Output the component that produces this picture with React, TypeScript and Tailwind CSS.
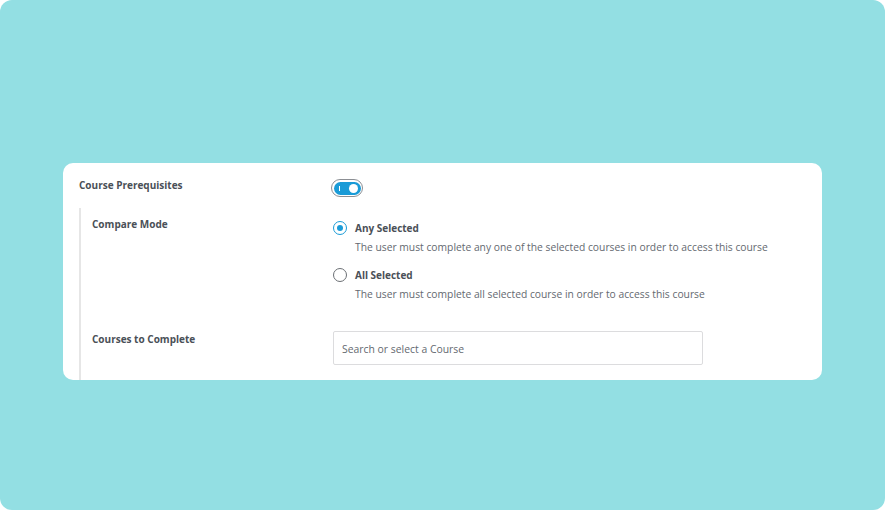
import React, { useState } from 'react';

const font = { fontFamily: '"Open Sans", "Noto Sans", sans-serif' };

const Toggle: React.FC<{ on: boolean; onChange: () => void }> = ({ on, onChange }) => (
  <button
    onClick={onChange}
    className="w-[32px] h-[18px] rounded-full border border-[#8c8f94] p-[1.5px] flex"
  >
    <span
      className={
        'flex-1 rounded-full flex items-center justify-between pl-[5px] pr-[3px] ' +
        (on ? 'bg-[#1a9bd7]' : 'bg-white')
      }
    >
      <span className="w-[1.5px] h-[5px] bg-white" />
      <span className="w-[9px] h-[9px] rounded-full bg-white" />
    </span>
  </button>
);

const Radio: React.FC<{ checked: boolean }> = ({ checked }) => (
  <span
    className={
      'w-[14px] h-[14px] rounded-full border-[1.5px] flex items-center justify-center shrink-0 ' +
      (checked ? 'border-[#1a9bd7]' : 'border-[#6b6f74]')
    }
  >
    {checked && <span className="w-[6px] h-[6px] rounded-full bg-[#1a9bd7]" />}
  </span>
);

const options = [
  {
    key: 'any',
    title: 'Any Selected',
    desc: 'The user must complete any one of the selected courses in order to access this course',
  },
  {
    key: 'all',
    title: 'All Selected',
    desc: 'The user must complete all selected course in order to access this course',
  },
];

export default function App() {
  const [enabled, setEnabled] = useState(true);
  const [mode, setMode] = useState('any');

  return (
    <div className="w-[885px] h-[510px] bg-white" style={font}>
      <div className="w-full h-full rounded-[12px] bg-[#93dfe3] pt-[163px] px-[63px]">
        <div className="h-[217px] bg-white rounded-[10px] overflow-hidden pl-[16px] pt-[13px]">
          <div className="flex">
            <div className="w-[252px] text-[10px] leading-[18px] font-bold text-[#4a5057]">
              Course Prerequisites
            </div>
            <div className="mt-[3px]">
              <Toggle on={enabled} onChange={() => setEnabled(!enabled)} />
            </div>
          </div>

          <div className="mt-[11px] border-l-2 border-[#e6e6e6] pl-[11px] pt-[7px] h-[200px]">
            <div className="flex">
              <div className="w-[241px] text-[10px] leading-[18px] font-bold text-[#4a5057]">
                Compare Mode
              </div>
              <div className="pt-[4px] flex flex-col gap-[11px]">
                {options.map((o) => (
                  <div key={o.key} className="cursor-pointer" onClick={() => setMode(o.key)}>
                    <div className="flex items-center gap-[8px]">
                      <Radio checked={mode === o.key} />
                      <span className="text-[10px] leading-[18px] font-bold text-[#4a5057]">{o.title}</span>
                    </div>
                    <div className="mt-[2px] pl-[22px] text-[10.3px] leading-[16px] text-[#646970]">{o.desc}</div>
                  </div>
                ))}
              </div>
            </div>

            <div className="flex mt-[28px]">
              <div className="w-[241px] text-[10px] leading-[18px] font-bold text-[#4a5057]">
                Courses to Complete
              </div>
              <div className="mt-[1px] w-[370px] h-[34px] border border-[#dcdcde] rounded-[2px] flex items-center px-[8px] pt-[3px] text-[10.4px] text-[#646970]">
                Search or select a Course
              </div>
            </div>
          </div>
        </div>
      </div>
    </div>
  );
}
